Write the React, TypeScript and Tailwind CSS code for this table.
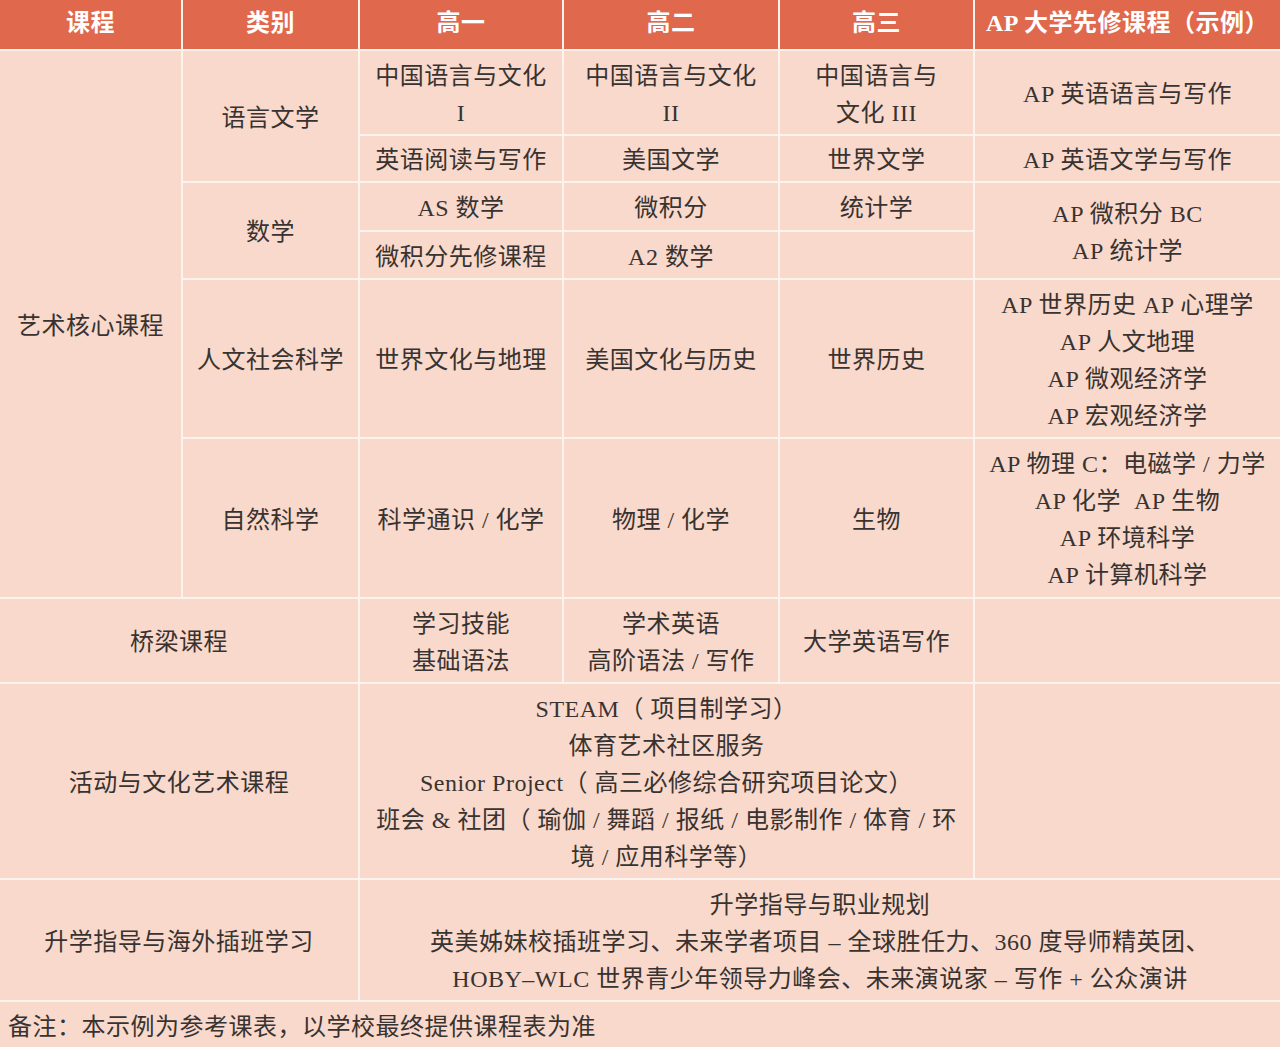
import React from 'react';

// 课程表：表头橙红，正文浅粉，白色细线分隔
function Cell({ className = '', children }: { className?: string; children?: React.ReactNode }) {
  return (
    <div className={`bg-[#f8d9cc] flex flex-col items-center justify-center text-center text-[#383330] pt-[4px] ${className}`}>
      {children}
    </div>
  );
}

function Head({ children }: { children: React.ReactNode }) {
  return (
    <div className="bg-[#e0684d] flex items-center justify-center text-white font-bold text-[24px] pb-[3px]">
      {children}
    </div>
  );
}

export default function App() {
  return (
    <div className="w-[1280px] h-[1047px] bg-[#fdf3ee] font-['Liberation_Serif','Noto_Sans_CJK_SC',sans-serif] text-[24px] leading-[37px] tracking-[0.5px]">
      <div className="grid grid-cols-[181px_175px_202px_214px_193px_305px] grid-rows-[49px_83px_45px_47px_46px_157px_158px_83px_194px_120px_45px] gap-[2px]">
        {/* header */}
        <Head>课程</Head>
        <Head>类别</Head>
        <Head>高一</Head>
        <Head>高二</Head>
        <Head>高三</Head>
        <Head>AP 大学先修课程（示例）</Head>

        {/* 艺术核心课程 */}
        <Cell className="row-span-6">艺术核心课程</Cell>
        <Cell className="row-span-2">语言文学</Cell>
        <Cell>
          <p>中国语言与文化</p>
          <p>I</p>
        </Cell>
        <Cell>
          <p>中国语言与文化</p>
          <p>II</p>
        </Cell>
        <Cell>
          <p>中国语言与</p>
          <p>文化 III</p>
        </Cell>
        <Cell>AP 英语语言与写作</Cell>

        <Cell>英语阅读与写作</Cell>
        <Cell>美国文学</Cell>
        <Cell>世界文学</Cell>
        <Cell>AP 英语文学与写作</Cell>

        <Cell className="row-span-2">数学</Cell>
        <Cell>AS 数学</Cell>
        <Cell>微积分</Cell>
        <Cell>统计学</Cell>
        <Cell className="row-span-2">
          <p>AP 微积分 BC</p>
          <p>AP 统计学</p>
        </Cell>

        <Cell>微积分先修课程</Cell>
        <Cell>A2 数学</Cell>
        <Cell />

        <Cell>人文社会科学</Cell>
        <Cell>世界文化与地理</Cell>
        <Cell>美国文化与历史</Cell>
        <Cell>世界历史</Cell>
        <Cell>
          <p>AP 世界历史 AP 心理学</p>
          <p>AP 人文地理</p>
          <p>AP 微观经济学</p>
          <p>AP 宏观经济学</p>
        </Cell>

        <Cell>自然科学</Cell>
        <Cell>科学通识 / 化学</Cell>
        <Cell>物理 / 化学</Cell>
        <Cell>生物</Cell>
        <Cell>
          <p>AP 物理 C：电磁学 / 力学</p>
          <p>AP 化学&nbsp;&nbsp;AP 生物</p>
          <p>AP 环境科学</p>
          <p>AP 计算机科学</p>
        </Cell>

        {/* 桥梁课程 */}
        <Cell className="col-span-2">桥梁课程</Cell>
        <Cell>
          <p>学习技能</p>
          <p>基础语法</p>
        </Cell>
        <Cell>
          <p>学术英语</p>
          <p>高阶语法 / 写作</p>
        </Cell>
        <Cell>大学英语写作</Cell>
        <Cell />

        {/* 活动 */}
        <Cell className="col-span-2">活动与文化艺术课程</Cell>
        <Cell className="col-span-3">
          <p>STEAM（ 项目制学习）</p>
          <p>体育艺术社区服务</p>
          <p>Senior Project（ 高三必修综合研究项目论文）</p>
          <p>班会 &amp; 社团（ 瑜伽 / 舞蹈 / 报纸 / 电影制作 / 体育 / 环</p>
          <p>境 / 应用科学等）</p>
        </Cell>
        <Cell />

        {/* 升学 */}
        <Cell className="col-span-2">升学指导与海外插班学习</Cell>
        <Cell className="col-span-4">
          <p>升学指导与职业规划</p>
          <p>英美姊妹校插班学习、未来学者项目 – 全球胜任力、360 度导师精英团、</p>
          <p>HOBY–WLC 世界青少年领导力峰会、未来演说家 – 写作 + 公众演讲</p>
        </Cell>

        {/* note */}
        <div className="col-span-6 bg-[#f8d9cc] flex items-center px-2 pt-[6px] text-[#383330]">
          备注：本示例为参考课表，以学校最终提供课程表为准
        </div>
      </div>
    </div>
  );
}
